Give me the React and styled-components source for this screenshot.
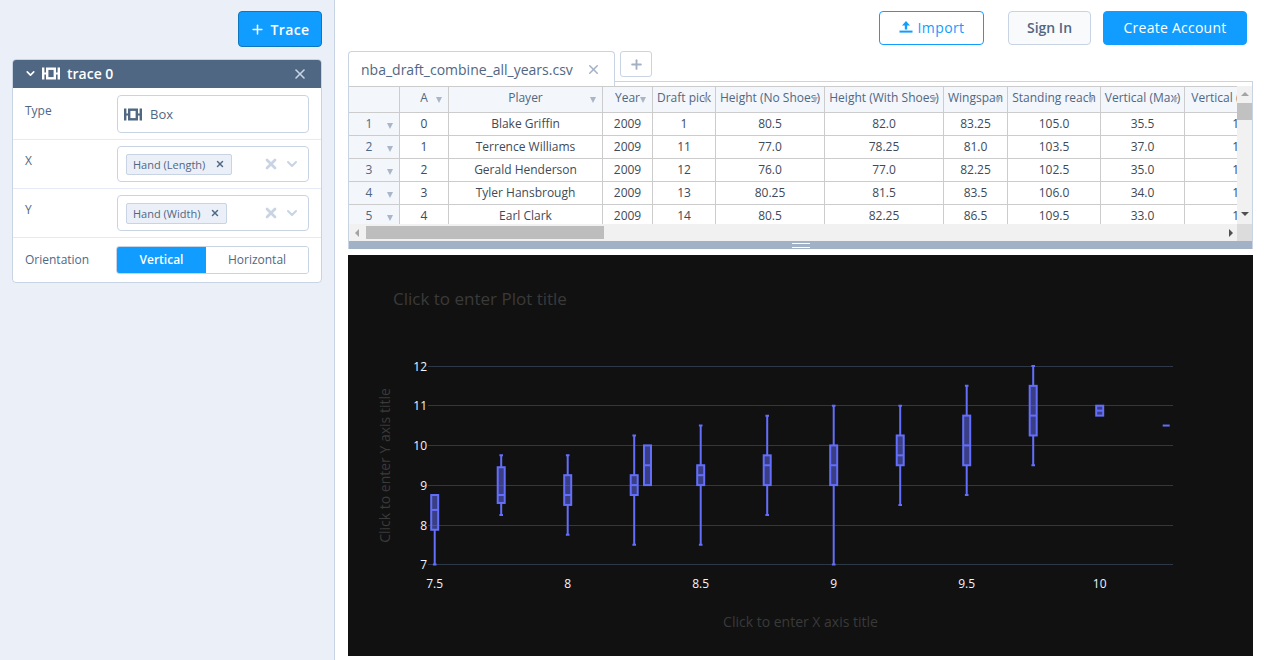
import React from "react";
import styled, { createGlobalStyle } from "styled-components";
import { X, ChevronDown, Plus } from "lucide-react";

const Global = createGlobalStyle`
  html, body { margin: 0; padding: 0; background: #fff; }
  * { box-sizing: border-box; }
  body { font-family: "Open Sans", "Liberation Sans", sans-serif; color: #506784; }
`;

const Page = styled.div`
  display: flex;
  width: 1265px;
  height: 660px;
  overflow: hidden;
`;
const Sidebar = styled.aside`
  width: 335px;
  flex: none;
  height: 660px;
  background: #ebf0f8;
  border-right: 1px solid #c8d4e3;
  padding: 11px 12px 0 12px;
  display: flex;
  flex-direction: column;
  align-items: stretch;
`;
const TraceButton = styled.button`
  align-self: flex-end;
  width: 84px;
  height: 36px;
  background: #119dff;
  border: 1px solid #0d76bf;
  border-radius: 4px;
  color: #fff;
  font: 600 14px "Open Sans", sans-serif;
  letter-spacing: 0.35px;
  display: flex;
  align-items: center;
  justify-content: center;
  gap: 6px;
  padding: 0 1px 0 0;
`;
const Panel = styled.section`
  margin-top: 12px;
  width: 310px;
  height: 224px;
  background: #fff;
  border: 1px solid #c8d4e3;
  border-radius: 4px;
  overflow: hidden;
`;
const PanelHead = styled.header`
  height: 29px;
  margin: -1px -1px 1px;
  background: #506784;
  color: #fff;
  display: flex;
  align-items: center;
  padding: 0 14px 0 12px;
  font-size: 14px;
  font-weight: 600;
`;
const HeadIcons = styled.span`
  display: flex;
  align-items: center;
  gap: 5px;
  margin-right: 7px;
`;
const HeadClose = styled.span`
  margin-left: auto;
  display: flex;
  color: #c8d4e3;
`;
const Row = styled.div`
  display: flex;
  align-items: ${(p) => (p.$center ? "center" : "flex-start")};
  height: ${(p) => p.$h}px;
  padding: ${(p) => (p.$center ? "0" : `${p.$top}px`)} 12px 0 12px;
  border-bottom: ${(p) => (p.$last ? "none" : "1px solid #e4eaf3")};
`;
const Label = styled.label`
  width: 92px;
  flex: none;
  font-size: 12px;
  line-height: 18px;
  color: #506784;
  margin-top: ${(p) => p.$mt || 0}px;
`;
const Control = styled.div`
  width: 192px;
  height: ${(p) => p.$h}px;
  border: 1px solid #c8d4e3;
  border-radius: 4px;
  display: flex;
  align-items: center;
  padding: 0 8px;
  background: #fff;
  font-size: 13px;
  color: #506784;
  gap: 8px;
`;
const TypeIcon = styled.span`
  display: flex;
  margin-left: -2px;
`;
const Chip = styled.span`
  height: 21px;
  background: #ebf0f8;
  border: 1px solid #c8d4e3;
  border-radius: 2px;
  display: inline-flex;
  align-items: center;
  padding: 0 6px;
  gap: 10px;
  font-size: 11px;
  color: #506784;
  white-space: nowrap;
`;
const ControlTail = styled.span`
  margin-left: auto;
  display: flex;
  align-items: center;
  gap: 5px;
  color: #c8d4e3;
`;
const Toggle = styled.div`
  margin-left: -1px;
  width: 193px;
  height: 28px;
  display: flex;
  border: 1px solid #c8d4e3;
  border-radius: 3px;
  overflow: hidden;
`;
const ToggleOption = styled.span`
  flex: ${(p) => (p.$active ? "0 0 89px" : "1")};
  display: flex;
  align-items: center;
  justify-content: center;
  padding-bottom: 2px;
  font-size: 12px;
  font-weight: ${(p) => (p.$active ? 600 : 400)};
  color: ${(p) => (p.$active ? "#fff" : "#506784")};
  background: ${(p) => (p.$active ? "#119dff" : "#fff")};
`;

const Main = styled.main`
  flex: 1;
  min-width: 0;
  padding: 0 12px 0 13px;
  display: flex;
  flex-direction: column;
`;
const TopBar = styled.div`
  height: 51px;
  padding: 11px 6px 0 0;
  display: flex;
  justify-content: flex-end;
  align-items: flex-start;
`;
const HeadButton = styled.button`
  height: 34px;
  width: ${(p) => p.$w}px;
  margin-left: ${(p) => p.$ml}px;
  border-radius: 4px;
  font: ${(p) => p.$weight} 14px "Open Sans", sans-serif;
  letter-spacing: ${(p) => p.$ls || 0}px;
  border: 1px solid ${(p) => p.$border};
  background: ${(p) => p.$bg};
  color: ${(p) => p.$color};
  display: flex;
  align-items: center;
  justify-content: center;
  gap: 5px;
  padding: 0 0 2px;
`;
const TabRow = styled.div`
  height: 31px;
  flex: none;
  display: flex;
  align-items: flex-start;
  gap: 5px;
  border-bottom: 1px solid #c8d4e3;
`;
const Tab = styled.div`
  position: relative;
  z-index: 1;
  width: 267px;
  height: 35px;
  flex: none;
  background: #fff;
  border: 1px solid #c8d4e3;
  border-bottom: none;
  border-radius: 4px 4px 0 0;
  display: flex;
  align-items: center;
  padding: 0 13px 0 12px;
  justify-content: space-between;
  font-size: 14px;
  color: #506784;
  white-space: nowrap;
`;
const TabClose = styled.span`
  display: flex;
  color: #a2b1c6;
`;
const AddTab = styled.button`
  width: 32px;
  height: 26px;
  background: #fff;
  border: 1px solid #c8d4e3;
  border-radius: 3px;
  color: #a2b1c6;
  display: flex;
  align-items: center;
  justify-content: center;
  padding: 0;
`;
const Sheet = styled.div`
  border-left: 1px solid #c8d4e3;
  border-right: 1px solid #c8d4e3;
  padding-top: 4px;
  background: #fff;
`;
const SheetBody = styled.div`
  display: flex;
  height: 138px;
`;
const Viewport = styled.div`
  width: 888px;
  flex: none;
  overflow: hidden;
  border-top: 1px solid #cccccc;
`;
const Grid = styled.div`
  display: grid;
  width: max-content;
  grid-template-columns: 51px 49px 154px 50px 63px 109px 119px 64px 93px 84px 126px;
  grid-template-rows: 26px repeat(5, 23px);
`;
const HeadCell = styled.div`
  position: relative;
  background: #f3f6fa;
  border-right: 1px solid #cccccc;
  border-bottom: 1px solid #cccccc;
  font-size: 12px;
  line-height: 22px;
  text-align: center;
  white-space: nowrap;
  overflow: hidden;
  color: #506784;
  padding-right: ${(p) => p.$pr || 0}px;
`;
const Cell = styled.div`
  border-right: 1px solid #cccccc;
  border-bottom: 1px solid #cccccc;
  font-size: 12px;
  line-height: 21px;
  text-align: center;
  white-space: nowrap;
  overflow: hidden;
  color: #404a57;
  background: #fff;
`;
const Caret = styled.i`
  position: absolute;
  right: 6px;
  top: ${(p) => p.$top}px;
  width: 0;
  height: 0;
  border-left: 3.5px solid transparent;
  border-right: 3.5px solid transparent;
  border-top: 6px solid #a9b6c8;
`;
const VScroll = styled.div`
  width: 15px;
  flex: none;
  background: #f1f1f1;
  display: flex;
  flex-direction: column;
  align-items: center;
`;
const VThumb = styled.div`
  width: 15px;
  height: 17px;
  background: #c1c1c1;
`;
const ArrowV = styled.i`
  width: 0;
  height: 0;
  border-left: 4px solid transparent;
  border-right: 4px solid transparent;
  ${(p) => (p.$up ? "border-bottom: 4px solid #a3a3a3;" : "border-top: 4px solid #505050;")}
  margin: ${(p) => p.$m};
`;
const HScroll = styled.div`
  height: 17px;
  display: flex;
  background: #f1f1f1;
`;
const HTrack = styled.div`
  width: 888px;
  display: flex;
  align-items: center;
  padding: 0 4px 0 6px;
`;
const HThumb = styled.div`
  width: 238px;
  height: 13px;
  margin-left: 7px;
  background: #bdbdbd;
`;
const ArrowH = styled.i`
  width: 0;
  height: 0;
  border-top: 4px solid transparent;
  border-bottom: 4px solid transparent;
  ${(p) => (p.$left ? "border-right: 4px solid #a3a3a3;" : "border-left: 4px solid #505050; margin-left: auto;")}
`;
const ScrollCorner = styled.div`
  width: 15px;
  background: #dcdcdc;
`;
const Resizer = styled.div`
  height: 8px;
  background: #a2b1c6;
  display: flex;
  justify-content: center;
  align-items: center;
`;
const Grip = styled.div`
  width: 18px;
  height: 5px;
  border-top: 1px solid #fff;
  border-bottom: 1px solid #fff;
`;
const PlotFrame = styled.svg`
  display: block;
  margin-top: 6px;
  width: 905px;
  height: 401px;
  background: #111111;
  font-family: "Open Sans", sans-serif;
`;

const BoxIcon = ({ color = "currentColor" }) => (
  <svg width="18" height="13" viewBox="0 0 18 13" fill="none" stroke={color}>
    <path d="M1.2 0.5v12M16.8 0.5v12" strokeWidth="2.4" />
    <path d="M1 6.5h4M13 6.5h4" strokeWidth="2" />
    <rect x="5.2" y="1.7" width="7.6" height="9.6" strokeWidth="2.4" />
  </svg>
);

const UploadIcon = () => (
  <svg width="14" height="12" viewBox="0 0 14 12" fill="#119dff">
    <path d="M7 0 11 4.4H8.2V8.6H5.8V4.4H3Z" />
    <rect x="0.5" y="9.6" width="13" height="2" />
  </svg>
);

const columns = [
  "A",
  "Player",
  "Year",
  "Draft pick",
  "Height (No Shoes)",
  "Height (With Shoes)",
  "Wingspan",
  "Standing reach",
  "Vertical (Max)",
  "Vertical (Max Reach)",
];
const rows = [
  ["0", "Blake Griffin", "2009", "1", "80.5", "82.0", "83.25", "105.0", "35.5", "140.5"],
  ["1", "Terrence Williams", "2009", "11", "77.0", "78.25", "81.0", "103.5", "37.0", "140.5"],
  ["2", "Gerald Henderson", "2009", "12", "76.0", "77.0", "82.25", "102.5", "35.0", "137.5"],
  ["3", "Tyler Hansbrough", "2009", "13", "80.25", "81.5", "83.5", "106.0", "34.0", "140.0"],
  ["4", "Earl Clark", "2009", "14", "80.5", "82.25", "86.5", "109.5", "33.0", "142.5"],
];

const xPos = (v) => 434.7 + (v - 7.5) * 266;
const yPos = (v) => 564.5 - (v - 7) * 39.7;
const yTicks = [
  [7, 564.5],
  [8, 525.5],
  [9, 485.5],
  [10, 445.5],
  [11, 405.5],
  [12, 366.5],
];
const xTicks = ["7.5", "8", "8.5", "9", "9.5", "10"];
const boxes = [
  [7.5, 7, 7.875, 8.375, 8.75, 8.75],
  [7.75, 8.25, 8.55, 8.75, 9.45, 9.75],
  [8, 7.75, 8.5, 8.75, 9.25, 9.75],
  [8.25, 7.5, 8.75, 9, 9.25, 10.25],
  [8.3, 9, 9, 9.5, 10, 10],
  [8.5, 7.5, 9, 9.25, 9.5, 10.5],
  [8.75, 8.25, 9, 9.5, 9.75, 10.75],
  [9, 7, 9, 9.5, 10, 11],
  [9.25, 8.5, 9.5, 9.75, 10.25, 11],
  [9.5, 8.75, 9.5, 10, 10.75, 11.5],
  [9.75, 9.5, 10.25, 10.75, 11.5, 12],
  [10, 10.75, 10.75, 10.875, 11, 11],
];
const TRACE = "#636efa";

const BoxGlyph = ({ x, lo, q1, med, q3, hi }) => {
  const cx = xPos(x);
  return (
    <g stroke={TRACE} strokeWidth="2">
      {lo < q1 && <path d={`M${cx} ${yPos(q1)}V${yPos(lo)}M${cx - 1.8} ${yPos(lo)}H${cx + 1.8}`} fill="none" />}
      {hi > q3 && <path d={`M${cx} ${yPos(q3)}V${yPos(hi)}M${cx - 1.8} ${yPos(hi)}H${cx + 1.8}`} fill="none" />}
      <rect x={cx - 3.5} y={yPos(q3)} width="7" height={yPos(q1) - yPos(q3)} fill={TRACE} fillOpacity="0.5" />
      <path d={`M${cx - 3.5} ${yPos(med)}H${cx + 3.5}`} fill="none" />
    </g>
  );
};

const Chart = () => (
  <PlotFrame viewBox="348 255 905 401">
    {yTicks.map(([t, y]) => (
      <g key={t}>
        <path d={`M428 ${y}H1173`} stroke="#2f3846" strokeWidth="1" />
        <text x="427" y={y + 4.5} textAnchor="end" fontSize="12" fill="#f2f5fa">{t}</text>
      </g>
    ))}
    {xTicks.map((t) => (
      <text key={t} x={xPos(parseFloat(t))} y="588" textAnchor="middle" fontSize="12" fill="#f2f5fa">{t}</text>
    ))}
    {boxes.map(([x, lo, q1, med, q3, hi]) => (
      <BoxGlyph key={x} x={x} lo={lo} q1={q1} med={med} q3={q3} hi={hi} />
    ))}
    <path d={`M${xPos(10.25) - 3.5} ${yPos(10.5)}H${xPos(10.25) + 3.5}`} stroke={TRACE} strokeWidth="2" />
    <text x="393" y="305" fontSize="17" fill="#3a3a3a">Click to enter Plot title</text>
    <text x="800.5" y="627" textAnchor="middle" fontSize="14" fill="#3a3a3a">Click to enter X axis title</text>
    <text transform="translate(390 465.5) rotate(-90)" textAnchor="middle" fontSize="14" fill="#3a3a3a">Click to enter Y axis title</text>
  </PlotFrame>
);

const MultiControl = ({ value }) => (
  <Control $h={36}>
    <Chip>
      {value}
      <X size={10} strokeWidth={3.6} color="#506784" />
    </Chip>
    <ControlTail>
      <X size={16} strokeWidth={4} />
      <ChevronDown size={16} strokeWidth={3} />
    </ControlTail>
  </Control>
);

export default function App() {
  return (
    <Page>
      <Global />
      <Sidebar>
        <TraceButton>
          <Plus size={15} strokeWidth={2.4} />
          Trace
        </TraceButton>
        <Panel>
          <PanelHead>
            <HeadIcons>
              <ChevronDown size={13} strokeWidth={3} />
              <BoxIcon />
            </HeadIcons>
            trace 0
            <HeadClose>
              <X size={16} strokeWidth={2.4} />
            </HeadClose>
          </PanelHead>
          <Row $h={51} $top={6}>
            <Label $mt={7}>Type</Label>
            <Control $h={38}>
              <TypeIcon>
                <BoxIcon color="#506784" />
              </TypeIcon>
              <span>Box</span>
            </Control>
          </Row>
          <Row $h={49} $top={6}>
            <Label $mt={6}>X</Label>
            <MultiControl value="Hand (Length)" />
          </Row>
          <Row $h={49} $top={6}>
            <Label $mt={6}>Y</Label>
            <MultiControl value="Hand (Width)" />
          </Row>
          <Row $h={44} $center $last>
            <Label>Orientation</Label>
            <Toggle>
              <ToggleOption $active>Vertical</ToggleOption>
              <ToggleOption>Horizontal</ToggleOption>
            </Toggle>
          </Row>
        </Panel>
      </Sidebar>
      <Main>
        <TopBar>
          <HeadButton $w={105} $ml={0} $weight={400} $ls={0.4} $border="#119dff" $bg="#fff" $color="#119dff">
            <UploadIcon />
            Import
          </HeadButton>
          <HeadButton $w={83} $ml={24} $weight={600} $border="#c8d4e3" $bg="#f8fafc" $color="#506784">
            Sign In
          </HeadButton>
          <HeadButton $w={144} $ml={12} $weight={500} $ls={0.25} $border="#119dff" $bg="#119dff" $color="#fff">
            Create Account
          </HeadButton>
        </TopBar>
        <TabRow>
          <Tab>
            nba_draft_combine_all_years.csv
            <TabClose>
              <X size={15} strokeWidth={2.4} />
            </TabClose>
          </Tab>
          <AddTab>
            <Plus size={15} strokeWidth={3} />
          </AddTab>
        </TabRow>
        <Sheet>
          <SheetBody>
            <Viewport>
              <Grid>
                <HeadCell />
                {columns.map((c) => (
                  <HeadCell key={c}>
                    {c}
                    <Caret $top={10} />
                  </HeadCell>
                ))}
                {rows.map((r, i) => (
                  <React.Fragment key={r[0]}>
                    <HeadCell $pr={10}>
                      {i + 1}
                      <Caret $top={10} />
                    </HeadCell>
                    {r.map((v, j) => (
                      <Cell key={j}>{v}</Cell>
                    ))}
                  </React.Fragment>
                ))}
              </Grid>
            </Viewport>
            <VScroll>
              <ArrowV $up $m="6px 0 7px" />
              <VThumb />
              <ArrowV $m="auto 0 8px" />
            </VScroll>
          </SheetBody>
          <HScroll>
            <HTrack>
              <ArrowH $left />
              <HThumb />
              <ArrowH />
            </HTrack>
            <ScrollCorner />
          </HScroll>
          <Resizer>
            <Grip />
          </Resizer>
        </Sheet>
        <Chart />
      </Main>
    </Page>
  );
}
